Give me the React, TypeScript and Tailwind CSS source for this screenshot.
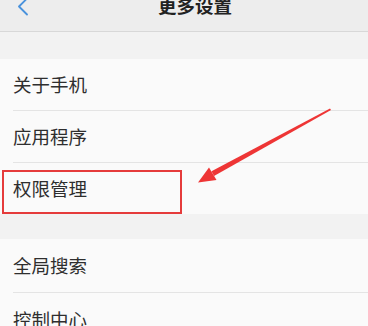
const rowsA = ['关于手机', '应用程序', '权限管理'];
const rowsB = ['全局搜索', '控制中心'];

function Row({ label, divider, h }: { label: string; divider: boolean; h: string }) {
  return (
    <div className="bg-[#fafafa]">
      <div className={`flex items-center pl-[13px] ${h}`}>
        <span className="text-[18.5px] leading-none text-[#2e2e2e]">{label}</span>
      </div>
      {divider && <div className="ml-[13px] h-px bg-[#e4e4e4]" />}
    </div>
  );
}

export default function App() {
  return (
    <div
      className="relative h-[326px] w-[368px] overflow-hidden bg-[#f2f2f2]"
      style={{ fontFamily: '"Noto Sans CJK SC", "Noto Sans", sans-serif' }}
    >
      {/* 顶栏 */}
      <div className="relative flex h-[32px] items-start border-b border-[#d8d8d8] bg-[#ededed]">
        <svg className="absolute left-[16px] top-[-3px]" width="13" height="19" viewBox="0 0 13 19">
          <path d="M11 1.5 L3 9.5 L11 17.5" fill="none" stroke="#4a92dc" strokeWidth="1.8" strokeLinecap="round" strokeLinejoin="round" />
        </svg>
        <div className="flex w-full justify-center pl-[22px]">
          <span className="mt-[-4px] text-[18.5px] font-bold leading-none text-[#222]">更多设置</span>
        </div>
      </div>

      <div className="h-[27px]" />

      <Row label={rowsA[0]} divider h="h-[51px]" />
      <Row label={rowsA[1]} divider h="h-[51px]" />
      <Row label={rowsA[2]} divider={false} h="h-[51px]" />

      <div className="h-[25px]" />

      <Row label={rowsB[0]} divider h="h-[53px]" />
      <Row label={rowsB[1]} divider={false} h="h-[53px]" />

      {/* 红框标注 */}
      <div className="absolute left-[2px] top-[170px] h-[44px] w-[180px] border-2 border-[#e53b3b]" />

      {/* 红色箭头 */}
      <svg className="absolute left-0 top-0" width="368" height="326" viewBox="0 0 368 326">
        <polygon points="330,108.5 331,110 214,176 211.5,171.2" fill="#ee3535" />
        <polygon points="198,182.5 209,167.5 216.5,180" fill="#ee3535" />
      </svg>
    </div>
  );
}
